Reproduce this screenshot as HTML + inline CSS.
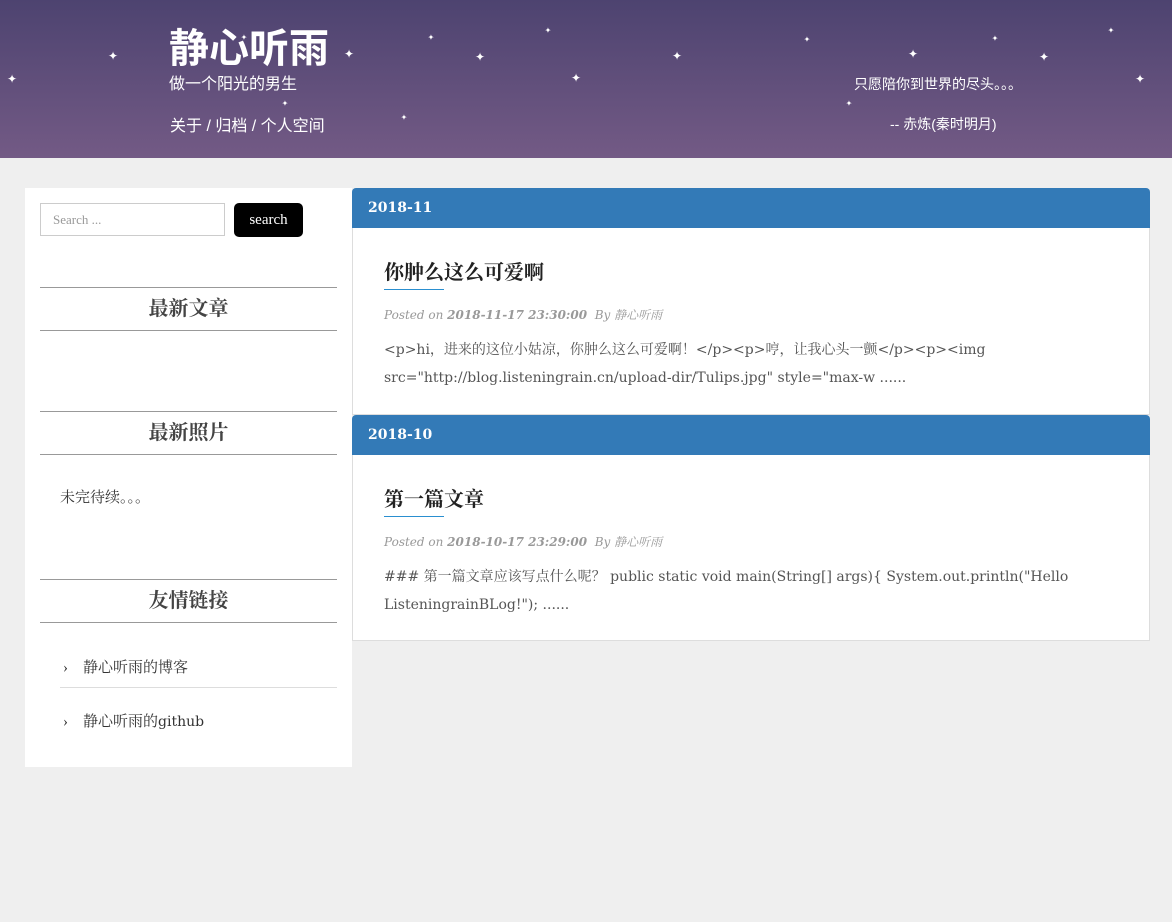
<!DOCTYPE html>
<html><head><meta charset="utf-8"><style>
*{margin:0;padding:0;box-sizing:border-box}
body{width:1172px;height:922px;background:#efefef;font-family:"Liberation Serif","Noto Serif CJK SC",serif;position:relative;overflow:hidden;color:#333}
.hd{position:absolute;left:0;top:0;width:1172px;height:158px;background:linear-gradient(#4d4370,#735a85)}
.a{position:absolute;white-space:nowrap}
.s{position:absolute;color:#fff;font-size:12px;line-height:12px;font-family:"DejaVu Sans",sans-serif;transform:translate(-50%,-50%)}
.sb{position:absolute;left:25px;top:188px;width:327px;height:579px;background:#fff}
.wt{position:absolute;left:15px;width:297px;height:44px;border-top:1px solid #999;border-bottom:1px solid #999;text-align:center;font-size:20px;line-height:42px;color:#444;font-weight:bold;font-family:"Liberation Serif","Noto Serif CJK SC",serif}
.bar{position:absolute;left:352px;width:798px;height:40px;background:#337ab7;border-radius:4px 4px 0 0;color:#fff;font-weight:bold;line-height:40px;padding-left:16px;font-family:"DejaVu Serif",serif;font-size:14px}
.card{position:absolute;left:352px;width:798px;background:#fff;border:1px solid #ddd;border-top:none}
.t{position:absolute;left:31px;font-size:20px;color:#222;font-weight:bold}
.ul{position:absolute;left:31px;width:60px;height:1px;background:#2a8fd0}
.m{position:absolute;left:31px;font-size:12px;color:#999;font-style:italic;font-family:"DejaVu Serif","Noto Serif CJK SC",serif}
.p{position:absolute;left:31px;font-size:14px;line-height:28px;color:#555;font-family:"DejaVu Serif","Noto Serif CJK SC",serif}
</style></head><body>
<div class="hd">
<div class="s" style="left:113px;top:56px">✦</div><div class="s" style="left:12px;top:79px">✦</div><div class="s" style="left:244px;top:38px;font-size:8px">✦</div><div class="s" style="left:285px;top:104px;font-size:8px">✦</div><div class="s" style="left:349px;top:54px">✦</div><div class="s" style="left:404px;top:118px;font-size:8px">✦</div><div class="s" style="left:431px;top:38px;font-size:8px">✦</div><div class="s" style="left:480px;top:57px">✦</div><div class="s" style="left:548px;top:31px;font-size:8px">✦</div><div class="s" style="left:576px;top:78px">✦</div><div class="s" style="left:677px;top:56px">✦</div><div class="s" style="left:807px;top:40px;font-size:8px">✦</div><div class="s" style="left:849px;top:104px;font-size:8px">✦</div><div class="s" style="left:913px;top:54px">✦</div><div class="s" style="left:995px;top:39px;font-size:8px">✦</div><div class="s" style="left:1044px;top:57px">✦</div><div class="s" style="left:1111px;top:31px;font-size:8px">✦</div><div class="s" style="left:1140px;top:79px">✦</div>
<div class="a" style="left:169px;top:24px;font-size:40px;line-height:50px;font-weight:bold;color:#fff;font-family:'Liberation Sans','Noto Sans CJK SC',sans-serif">静心听雨</div>
<div class="a" style="left:169px;top:74px;font-size:16px;line-height:22px;color:#fff;font-family:'Liberation Sans','Noto Sans CJK SC',sans-serif">做一个阳光的男生</div>
<div class="a" style="left:170px;top:116px;font-size:16px;line-height:22px;color:#fff;font-family:'Liberation Sans','Noto Sans CJK SC',sans-serif">关于 / 归档 / 个人空间</div>
<div class="a" style="left:854px;top:74px;font-size:14px;line-height:20px;color:#fff;font-family:'Liberation Sans','Noto Sans CJK SC',sans-serif">只愿陪你到世界的尽头。。。</div>
<div class="a" style="left:890px;top:114px;font-size:14px;line-height:20px;color:#fff;font-family:'Liberation Sans','Noto Sans CJK SC',sans-serif">-- 赤炼(秦时明月)</div>
</div>
<div class="sb">
<div class="a" style="left:15px;top:15px;width:185px;height:33px;border:1px solid #ccc;font-size:13px;line-height:31px;padding-left:12px;color:#999">Search ...</div>
<div class="a" style="left:209px;top:15px;width:69px;height:34px;background:#000;border-radius:5px;color:#fff;font-size:15px;line-height:34px;text-align:center">search</div>
<div class="wt" style="top:99px">最新文章</div>
<div class="wt" style="top:223px">最新照片</div>
<div class="a" style="left:35px;top:298px;font-size:15px;color:#333">未完待续。。。</div>
<div class="wt" style="top:391px">友情链接</div>
<div class="a" style="left:38px;top:468px;font-size:15px;color:#333">›&nbsp;&nbsp;&nbsp;&nbsp;静心听雨的博客</div>
<div class="a" style="left:35px;top:499px;width:277px;height:1px;background:#ddd"></div>
<div class="a" style="left:38px;top:522px;font-size:15px;color:#333">›&nbsp;&nbsp;&nbsp;&nbsp;静心听雨的<span style="font-family:'DejaVu Serif',serif;font-size:14px">github</span></div>
</div>
<div class="bar" style="top:188px">2018-11</div>
<div class="card" style="top:228px;height:187px">
<div class="t" style="top:28px">你肿么这么可爱啊</div>
<div class="ul" style="top:61px"></div>
<div class="m" style="top:78px">Posted on <b>2018-11-17 23:30:00</b>&nbsp; By 静心听雨</div>
<div class="p" style="top:108px">&lt;p&gt;hi，进来的这位小姑凉，你肿么这么可爱啊！&lt;/p&gt;&lt;p&gt;哼，让我心头一颤&lt;/p&gt;&lt;p&gt;&lt;img<br>src="http://blog.listeningrain.cn/upload-dir/Tulips.jpg" style="max-w ......</div>
</div>
<div class="bar" style="top:415px">2018-10</div>
<div class="card" style="top:455px;height:186px">
<div class="t" style="top:28px">第一篇文章</div>
<div class="ul" style="top:61px"></div>
<div class="m" style="top:78px">Posted on <b>2018-10-17 23:29:00</b>&nbsp; By 静心听雨</div>
<div class="p" style="top:108px">### 第一篇文章应该写点什么呢？ public static void main(String[] args){ System.out.println("Hello<br>ListeningrainBLog!"); ......</div>
</div>
</body></html>
